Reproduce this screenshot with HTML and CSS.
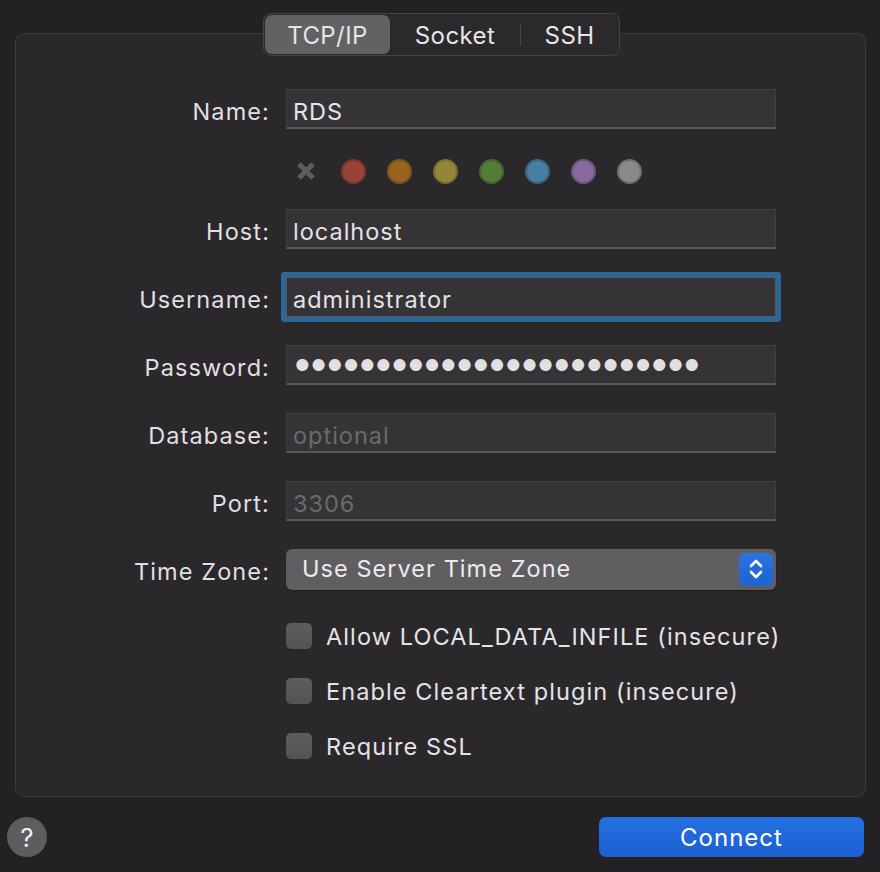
FILE: index.html
```html
<!DOCTYPE html>
<html>
<head>
<meta charset="utf-8">
<link rel="stylesheet" href="styles.css">
</head>
<body>
<div class="window">
  <div class="segmented">
    <div class="seg seg-active">TCP/IP</div>
    <div class="seg seg-socket">Socket</div>
    <div class="seg-divider"></div>
    <div class="seg seg-ssh">SSH</div>
  </div>
  <div class="panel">
    <div class="row">
      <label class="label">Name:</label>
      <div class="field"><span class="value">RDS</span></div>
    </div>
    <div class="row row-colors">
      <div class="label"></div>
      <div class="colors">
        <svg class="clear" width="22" height="22" viewBox="0 0 22 22"><path d="M4 4 L18 18 M18 4 L4 18" stroke="#5f5c60" stroke-width="5" stroke-linecap="butt"/></svg>
        <span class="dot dot-red"></span>
        <span class="dot dot-orange"></span>
        <span class="dot dot-yellow"></span>
        <span class="dot dot-green"></span>
        <span class="dot dot-blue"></span>
        <span class="dot dot-purple"></span>
        <span class="dot dot-gray"></span>
      </div>
    </div>
    <div class="row row-host">
      <label class="label">Host:</label>
      <div class="field"><span class="value">localhost</span></div>
    </div>
    <div class="row">
      <label class="label">Username:</label>
      <div class="field field-focus"><span class="value">administrator</span></div>
    </div>
    <div class="row">
      <label class="label">Password:</label>
      <div class="field"><span class="value password">●●●●●●●●●●●●●●●●●●●●●●●●●</span></div>
    </div>
    <div class="row">
      <label class="label">Database:</label>
      <div class="field"><span class="value placeholder">optional</span></div>
    </div>
    <div class="row">
      <label class="label">Port:</label>
      <div class="field"><span class="value placeholder">3306</span></div>
    </div>
    <div class="row">
      <label class="label">Time Zone:</label>
      <div class="popup">
        <span class="popup-text">Use Server Time Zone</span>
        <span class="stepper">
          <svg width="16" height="24" viewBox="0 0 16 24"><path d="M3 9 L8 4 L13 9 M3 15 L8 20 L13 15" fill="none" stroke="#fff" stroke-width="2.6" stroke-linecap="round" stroke-linejoin="round"/></svg>
        </span>
      </div>
    </div>
    <div class="check-row check-first">
      <div class="label"></div>
      <span class="checkbox"></span>
      <span class="check-text">Allow LOCAL_DATA_INFILE (insecure)</span>
    </div>
    <div class="check-row">
      <div class="label"></div>
      <span class="checkbox"></span>
      <span class="check-text">Enable Cleartext plugin (insecure)</span>
    </div>
    <div class="check-row">
      <div class="label"></div>
      <span class="checkbox"></span>
      <span class="check-text">Require SSL</span>
    </div>
  </div>
  <div class="footer">
    <div class="help">?</div>
    <div class="connect">Connect</div>
  </div>
</div>
</body>
</html>
```
FILE: styles.css
```css
* { box-sizing: border-box; }
html, body {
  margin: 0;
  padding: 0;
  background: #242125;
  width: 880px;
  height: 872px;
  overflow: hidden;
}
body {
  font-family: "Inter", "Liberation Sans", sans-serif;
  color: #e2e1e3;
  font-size: 24px;
}
.window {
  display: flex;
  flex-direction: column;
  padding: 13px 0 0 15px;
}
.segmented {
  position: relative;
  z-index: 2;
  align-self: flex-start;
  margin-left: 248px;
  display: flex;
  align-items: center;
  height: 43px;
  padding: 1px;
  border: 1px solid #454246;
  border-radius: 8px;
  background: #2c292d;
}
.seg {
  height: 39px;
  display: flex;
  align-items: center;
  justify-content: center;
  color: #e6e5e7;
  font-size: 24px;
  letter-spacing: 0.4px;
  padding-top: 2px;
}
.seg-active {
  width: 125px;
  background: #646165;
  border-radius: 7px;
}
.seg-socket { width: 130px; }
.seg-ssh { width: 97px; }
.seg-divider {
  width: 1px;
  height: 22px;
  background: #48454a;
}
.panel {
  margin-top: -23px;
  width: 851px;
  height: 764px;
  background: #2b282c;
  border: 1px solid #3e3b3f;
  border-radius: 9px;
  padding-top: 55px;
  display: flex;
  flex-direction: column;
}
.row {
  display: flex;
  align-items: center;
  height: 40px;
  margin-top: 28px;
}
.row:first-child { margin-top: 0; }
.label {
  width: 254px;
  flex: none;
  text-align: right;
  color: #e0dfe1;
  font-size: 23.5px;
  letter-spacing: 1.1px;
  margin-right: 16px;
  padding-top: 5px;
}
.field {
  width: 490px;
  height: 40px;
  background: #363337;
  border: 1px solid #434044;
  border-bottom: 2px solid #5a575b;
  display: flex;
  align-items: center;
  padding-left: 6px;
  padding-top: 5px;
}
.field-focus {
  border: 1px solid #59565a;
  box-shadow: 0 0 0 5px #2c6897;
  border-radius: 1px;
}
.value {
  color: #e4e3e5;
  font-size: 23.5px;
  letter-spacing: 1px;
}
.password {
  font-size: 16px;
  letter-spacing: 1.6px;
  padding-left: 2px;
  margin-top: -5px;
  color: #e0dfe1;
}
.placeholder { color: #6c696d; }
.row-colors {
  height: 26px;
  margin-top: 29px;
}
.row-host { margin-top: 25px; }
.colors {
  display: flex;
  align-items: center;
  gap: 21px;
  padding-left: 9px;
}
.clear { flex: none; margin-right: 3px; }
.dot {
  width: 25px;
  height: 25px;
  border-radius: 50%;
  flex: none;
  border: 2px solid;
}
.dot-red { background: #9b4237; border-color: #7f372f; }
.dot-orange { background: #99631f; border-color: #7d531f; }
.dot-yellow { background: #928638; border-color: #776f32; }
.dot-green { background: #537d36; border-color: #43662f; }
.dot-blue { background: #487ea0; border-color: #3b6683; }
.dot-purple { background: #89689d; border-color: #6f5681; }
.dot-gray { background: #8b8a8b; border-color: #6f6e70; }
.popup {
  width: 490px;
  height: 41px;
  background: #615e62;
  border-radius: 6px;
  box-shadow: 0 1px 1px rgba(0,0,0,0.35);
  display: flex;
  align-items: center;
  justify-content: space-between;
  padding: 0 3px 0 16px;
}
.popup-text {
  color: #ebeaec;
  font-size: 23.5px;
  letter-spacing: 1.05px;
  margin-top: -2px;
}
.stepper {
  width: 34px;
  height: 33px;
  background: linear-gradient(#2a73e3, #1d63d2);
  border-radius: 6px;
  display: flex;
  align-items: center;
  justify-content: center;
}
.check-row {
  display: flex;
  align-items: center;
  height: 26px;
  margin-top: 29px;
}
.check-first { margin-top: 34px; }
.check-row .label { padding-top: 0; }
.checkbox {
  width: 26px;
  height: 26px;
  flex: none;
  border-radius: 5px;
  background: linear-gradient(#5f5c60, #555256);
  margin-right: 14px;
}
.check-text {
  font-size: 23.5px;
  letter-spacing: 1.1px;
  color: #e4e3e5;
  white-space: nowrap;
  padding-top: 1px;
}
.footer {
  display: flex;
  justify-content: space-between;
  align-items: center;
  margin-top: 20px;
  margin-left: -8px;
  width: 857px;
}
.help {
  width: 40px;
  height: 40px;
  border-radius: 50%;
  background: #5f5c60;
  color: #f0eff1;
  display: flex;
  align-items: center;
  justify-content: center;
  font-size: 26px;
}
.connect {
  width: 265px;
  height: 40px;
  border-radius: 7px;
  background: linear-gradient(#2470e3, #1c60cf);
  color: #fff;
  display: flex;
  align-items: center;
  justify-content: center;
  font-size: 24px;
  letter-spacing: 1px;
}
```
